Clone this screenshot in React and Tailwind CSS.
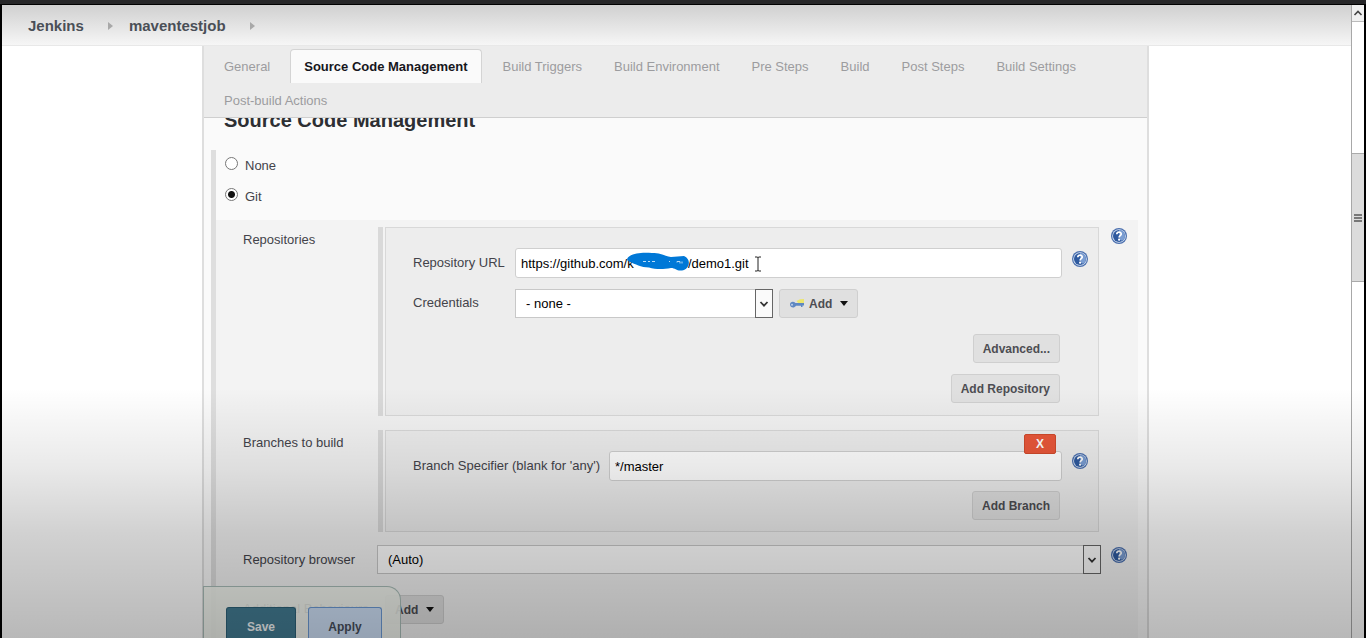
import React, { useState } from "react";

function HelpIcon({ topic }) {
  return (
    <button type="button" aria-label={"Help for " + topic} className="block size-4 shrink-0">
      <svg viewBox="0 0 16 16" className="size-4">
        <circle cx="8" cy="8" r="8" fill="#4a6fae" />
        <circle cx="8" cy="8" r="6.800" fill="#dbe5f4" />
        <circle cx="8" cy="8" r="6" fill="#2f5a9f" />
        <path d="M8 2a6 6 0 0 1 3.500 10.800Q9.200 13 8.400 9.500z" fill="#7a9dd2" />
        <path d="M5.800 6.200C5.900 3.400 10.300 3.500 10.200 6.100C10.100 7.700 8.100 7.700 8.100 9.500" fill="none" stroke="#fff" strokeWidth="1.700" />
        <circle cx="8.100" cy="11.700" r="1.100" fill="#fff" />
      </svg>
    </button>
  );
}

function GreyButton({ children }) {
  return (
    <button
      type="button"
      className="flex h-[29px] items-center rounded-[3px] border border-[#cfcfcf] bg-[#e0e0e0] px-[9px] text-[12px] font-bold text-[#4d4d52]"
    >
      {children}
    </button>
  );
}

function DropArrow() {
  return (
    <svg viewBox="0 0 8 5" className="ml-2 h-[5px] w-2">
      <path d="M0 0h8L4 5z" fill="#111" />
    </svg>
  );
}

function SelectBox({ id, option, className }) {
  return (
    <div className={"relative h-[29px] " + className}>
      <select
        id={id}
        className="h-full w-full appearance-none border border-[#c8c8c8] bg-white pl-[10px] text-[13px] text-black"
      >
        <option>{option}</option>
      </select>
      <span className="pointer-events-none absolute inset-y-0 right-0 flex w-[18px] items-center justify-center border border-[#666] bg-[#fafafa]">
        <svg viewBox="0 0 10 8" className="h-2 w-[10px]">
          <path d="M1.500 2L5 5.700L8.500 2" fill="none" stroke="#333" strokeWidth="1.800" />
        </svg>
      </span>
    </div>
  );
}

function Repeatable({ children }) {
  return (
    <div className="min-w-0 flex-1 border-l-[5px] border-[#d9d9d9] pl-[2px]">
      <div className="h-full border border-[#d8d8d8] bg-[#ededed]">{children}</div>
    </div>
  );
}

function Crumb({ children }) {
  return (
    <li className="flex items-center">
      <a href="#" className="text-[15px] font-bold text-[#4a4f57]">{children}</a>
      <svg viewBox="0 0 5 8" className="ml-6 mr-4 h-2 w-[5px]">
        <path d="M0 0l5 4-5 4z" fill="#a8a8a8" />
      </svg>
    </li>
  );
}

const tabs = ["General", "Source Code Management", "Build Triggers", "Build Environment", "Pre Steps", "Build", "Post Steps", "Build Settings", "Post-build Actions"];

function Tabs() {
  return (
    <nav className="flex shrink-0 flex-wrap border-b border-[#cfcfcf] bg-[#ececec] pl-2 pr-10 pt-[3px]">
      {tabs.map((tab) => (
        <a
          key={tab}
          href="#"
          className={
            tab === "Source Code Management"
              ? "mr-[9px] flex h-[34px] items-center rounded-t-[4px] border border-b-0 border-[#d4d4d4] bg-[#fafafa] px-[13px] text-[13px] font-bold text-[#16161c]"
              : "mr-2 flex h-[35px] items-center px-3 text-[13px] text-[#9c9c9f] last:mr-0 last:h-[33px]"
          }
        >
          {tab}
        </a>
      ))}
    </nav>
  );
}

function ScmForm() {
  const [scm, setScm] = useState("git");
  const [url, setUrl] = useState("https://github.com/k               /demo1.git");
  const [branch, setBranch] = useState("*/master");
  return (
    <form className="min-h-0 flex-1 overflow-hidden pl-[7px] pr-[9px]">
      <h1 className="-mt-[10px] mb-[17px] pl-[13px] text-[20px] font-bold leading-[25px] text-[#2d2f33]">Source Code Management</h1>
      <div className="border-l-[5px] border-[#dedede] pb-10">
        <div className="flex flex-col gap-[13px] pb-[14px] pl-[9px] pt-[7px] text-[13px] leading-[18px] text-[#43434a]">
          <label className="flex gap-[7px]">
            <input type="radio" name="scm" checked={scm === "none"} onChange={() => setScm("none")} className="m-0 size-[13px] appearance-none rounded-full border border-[#777] bg-white" />
            <span>None</span>
          </label>
          <label className="flex gap-[7px]">
            <input type="radio" name="scm" checked={scm === "git"} onChange={() => setScm("git")} className="m-0 size-[13px] appearance-none rounded-full border border-[#777] bg-white checked:bg-[radial-gradient(circle,#111_0_3px,#fff_4px)]" />
            <span>Git</span>
          </label>
        </div>

        <div className="bg-[#f3f3f3] pb-10 pl-[27px] pr-[11px] pt-[7px] text-[13px] leading-[18px] text-[#43434a]">
          <div className="mb-[14px] flex">
            <h2 className="w-[135px] shrink-0 pt-1">Repositories</h2>
            <Repeatable>
              <div className="flex flex-col pb-3 pl-[27px] pr-[10px] pt-5">
                <div className="mb-[11px] flex items-start">
                  <label htmlFor="url" className="w-[102px] shrink-0 pt-[6px]">Repository URL</label>
                  <div className="relative flex-1">
                    <input id="url" value={url} onChange={(e) => setUrl(e.target.value)} className="block h-[30px] w-full rounded-[3px] border border-[#cfcfcf] bg-white px-[5px] text-[13px] text-black" />
                    <svg viewBox="0 0 62 20" className="pointer-events-none absolute left-[112px] top-[4px] h-5 w-[62px]">
                      <path d="M0 7C3 1 15 0 25 1C34 1 38 4 44 5L57 4C64 7 63 15 57 18C50 20 49 16 44 16C34 18 28 17 22 15.500C14 15.500 8 12 3 10Q0 9 0 7Z" fill="#0078d7" />
                      <path d="M16 9.500h3m2 0h2m2 0h3m14 0h1m7 1v-1h3v2m2 0v-2" stroke="#b8dcf7" strokeWidth="1" fill="none" />
                    </svg>
                    <svg viewBox="0 0 8 16" className="pointer-events-none absolute left-[239px] top-2 h-4 w-2">
                      <path d="M1 1h2.500l.5.500.5-.5H7M4 1v14M1 15h2.500l.5-.5.5.5H7" fill="none" stroke="#222" strokeWidth="1" />
                    </svg>
                  </div>
                  <div className="ml-[10px] pt-[3px]"><HelpIcon topic="Repository URL" /></div>
                </div>
                <div className="mb-4 flex items-start">
                  <label htmlFor="credentials" className="w-[102px] shrink-0 pt-[5px]">Credentials</label>
                  <SelectBox id="credentials" option="- none -" className="w-[258px]" />
                  <div className="ml-[6px]">
                    <GreyButton>
                      <svg viewBox="0 0 16 12" className="mr-1 h-3 w-4">
                        <path d="M7.500 3L11 1.200l4-.2v4H9z" fill="#ece66e" />
                        <path d="M1 6.500C1 3.500 4.500 3 6.500 5H15v2.500h-1.500V9h-1.500V7.800H7C5 11 1 9.500 1 6.500Z" fill="#5f88c2" />
                        <circle cx="3" cy="6.800" r="1" fill="#bdd0ea" />
                      </svg>
                      Add
                      <DropArrow />
                    </GreyButton>
                  </div>
                </div>
                <div className="flex flex-col items-end gap-[11px] pr-7">
                  <GreyButton>Advanced...</GreyButton>
                  <GreyButton>Add Repository</GreyButton>
                </div>
              </div>
            </Repeatable>
            <div className="ml-3 pt-[1px]"><HelpIcon topic="Repositories" /></div>
          </div>

          <div className="mb-[13px] flex">
            <h2 className="w-[135px] shrink-0 pt-1">Branches to build</h2>
            <Repeatable>
              <div className="flex flex-col pb-[11px] pl-[27px] pr-[10px] pt-5">
                <div className="mb-[10px] flex items-start">
                  <label htmlFor="branch" className="w-[196px] shrink-0 pt-[6px]">Branch Specifier (blank for 'any')</label>
                  <div className="relative flex-1">
                    <input id="branch" value={branch} onChange={(e) => setBranch(e.target.value)} className="block h-[30px] w-full rounded-[3px] border border-[#cfcfcf] bg-white px-[5px] text-[13px] text-black" />
                    <button type="button" aria-label="Delete branch" className="absolute -top-[17px] right-[6px] h-5 w-8 rounded-[2px] border border-[#d04a2c] bg-[#e9573a] text-[12px] font-bold leading-[18px] text-white">X</button>
                  </div>
                  <div className="ml-[10px] pt-[2px]"><HelpIcon topic="Branch Specifier" /></div>
                </div>
                <div className="flex justify-end pr-7">
                  <GreyButton>Add Branch</GreyButton>
                </div>
              </div>
            </Repeatable>
            <div className="w-7 shrink-0" />
          </div>

          <div className="mb-[21px] flex items-start">
            <label htmlFor="browser" className="w-[134px] shrink-0 pt-[6px]">Repository browser</label>
            <SelectBox id="browser" option="(Auto)" className="min-w-0 flex-1" />
            <div className="ml-[10px] pt-[2px]"><HelpIcon topic="Repository browser" /></div>
          </div>

          <div className="flex items-start">
            <h2 className="w-[142px] shrink-0 pt-[5px]">Additional Behaviours</h2>
            <GreyButton>Add<DropArrow /></GreyButton>
          </div>
        </div>
      </div>
    </form>
  );
}

function ScrollBar() {
  return (
    <div className="flex w-[13px] shrink-0 flex-col border-l border-[#a8a8a8] bg-white" aria-hidden="true">
      <div className="flex h-[17px] items-center justify-center border-b border-[#bbb] bg-[#f0f0f0]">
        <svg viewBox="0 0 10 8" className="h-2 w-[10px]">
          <path d="M1.500 6L5 2.500L8.500 6" fill="none" stroke="#444" strokeWidth="1.600" />
        </svg>
      </div>
      <div className="mt-[131px] flex h-[129px] items-center justify-center border-y border-[#aaa] bg-[#dcdcdc]">
        <svg viewBox="0 0 8 8" className="h-2 w-2">
          <path d="M0 1h8M0 4h8M0 7h8" stroke="#555" strokeWidth="1.500" />
        </svg>
      </div>
    </div>
  );
}

export default function App() {
  return (
    <div className="flex h-screen flex-col overflow-hidden bg-[#111] font-['Liberation_Sans',Arial,sans-serif]">
      <div className="h-[5px] shrink-0 border-b border-black bg-[#262628]" />
      <div className="relative flex min-h-0 flex-1 border-x-2 border-black bg-white">
        <div className="flex min-w-0 flex-1 flex-col">
          <header className="h-[41px] shrink-0 border-b border-[#e8e8e8] bg-linear-to-b from-[#d0d0d0] to-[#f6f6f6] pt-[2px]">
            <ol className="flex h-full items-center pl-[26px]">
              <Crumb>Jenkins</Crumb>
              <Crumb>maventestjob</Crumb>
            </ol>
          </header>
          <main className="relative ml-[200px] mr-[202px] flex min-h-0 flex-1 flex-col border-x-2 border-[#dedede] bg-[#fafafa]">
            <Tabs />
            <ScmForm />
            <div className="absolute -left-px bottom-0 flex h-[52px] w-[198px] items-end gap-3 rounded-tr-[14px] border border-b-0 border-[#a9bdb8] bg-[#f2f5ee]/90 pl-[22px]">
              <button type="button" className="h-[31px] w-[70px] rounded-t-[3px] border border-b-0 border-[#2c6178] bg-[#437c93] pt-[7px] text-[12px] font-bold text-[#f2f6f8]">Save</button>
              <button type="button" className="h-[31px] w-[74px] rounded-t-[3px] border border-b-0 border-[#6c9bd6] bg-[#cfe1f8] pt-[7px] text-[12px] font-bold text-[#464e5c]">Apply</button>
            </div>
          </main>
        </div>
        <ScrollBar />
        <div className="pointer-events-none absolute inset-x-0 bottom-0 h-[250px] bg-[linear-gradient(to_bottom,rgba(0,0,0,0)_0%,rgba(0,0,0,0.035)_13%,rgba(0,0,0,0.085)_32%,rgba(0,0,0,0.180)_58%,rgba(0,0,0,0.280)_100%)]" />
      </div>
    </div>
  );
}
